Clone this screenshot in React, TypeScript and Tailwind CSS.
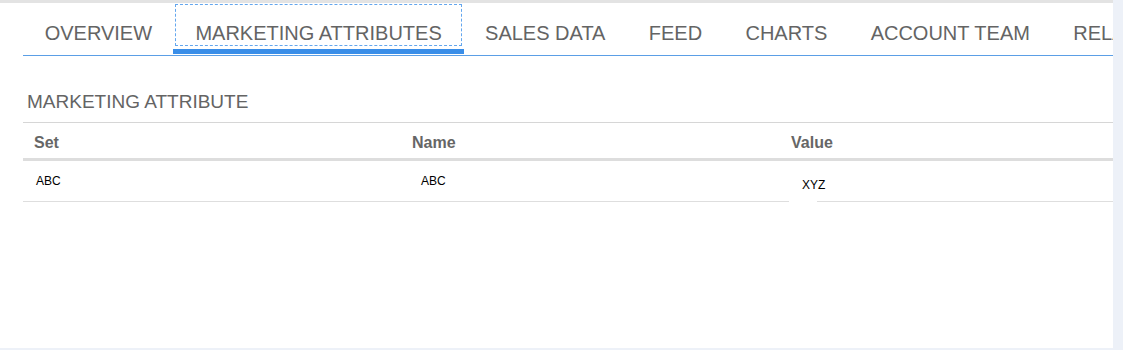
import React from "react";

const tabs = ["OVERVIEW", "MARKETING ATTRIBUTES", "SALES DATA", "FEED", "CHARTS", "ACCOUNT TEAM", "RELATIONSHIPS"];
const active = 1;

const App: React.FC = () => {
  return (
    <div className="flex h-[350px] w-[1123px] bg-[#edf1f8] font-['Liberation_Sans',Arial,sans-serif]">
      <div className="flex h-[348px] w-[1113px] flex-col bg-white">
        <div className="h-[3px] bg-[#e3e3e3]" />

        {/* tab strip */}
        <div className="ml-[23px] flex w-[1090px] overflow-hidden border-b border-[#5b9fe6]">
          {tabs.map((tab, idx) => (
            <div key={tab} className="flex shrink-0 flex-col">
              <div
                className={`mx-px mt-px flex h-[42px] items-start whitespace-nowrap border px-[19.67px] pt-[17px] text-[20px] leading-[23px] text-[#646464] ${
                  idx === active ? "border-dashed border-[#63a6ee]" : "border-transparent"
                }`}
              >
                {tab}
              </div>
              <div className={`-mx-px mt-[3px] h-[5px] ${idx === active ? "bg-[#3a8ee8]" : "bg-transparent"}`} />
              <div className="h-px" />
            </div>
          ))}
        </div>

        {/* marketing attribute section */}
        <div className="ml-[23px] mt-[35px] w-[1090px]">
          <h2 className="mb-[9px] pl-[4px] text-[19px] font-normal leading-[22px] text-[#646464]">MARKETING ATTRIBUTE</h2>

          <div className="grid h-[39px] grid-cols-[378px_379px_1fr] border-t border-b-[3px] border-t-[#d6d6d6] border-b-[#dddddd] pt-[11px] text-[16px] font-bold leading-[18px] text-[#666666]">
            <div className="pl-[11px]">Set</div>
            <div className="pl-[11px]">Name</div>
            <div className="pl-[11px]">Value</div>
          </div>

          <div className="grid h-[41px] grid-cols-[378px_379px_1fr] border-b border-[#dedede] text-[12px] leading-[14px] text-black">
            <div className="pl-[13px] pt-[13px]">ABC</div>
            <div className="pl-[20px] pt-[13px]">ABC</div>
            <div className="flex flex-col">
              <span className="mb-[-1px] ml-[9px] mt-auto h-[27px] w-[28px] whitespace-nowrap bg-white pl-[13px] pt-[3px]">
                XYZ
              </span>
            </div>
          </div>
        </div>
      </div>
    </div>
  );
};

export default App;
